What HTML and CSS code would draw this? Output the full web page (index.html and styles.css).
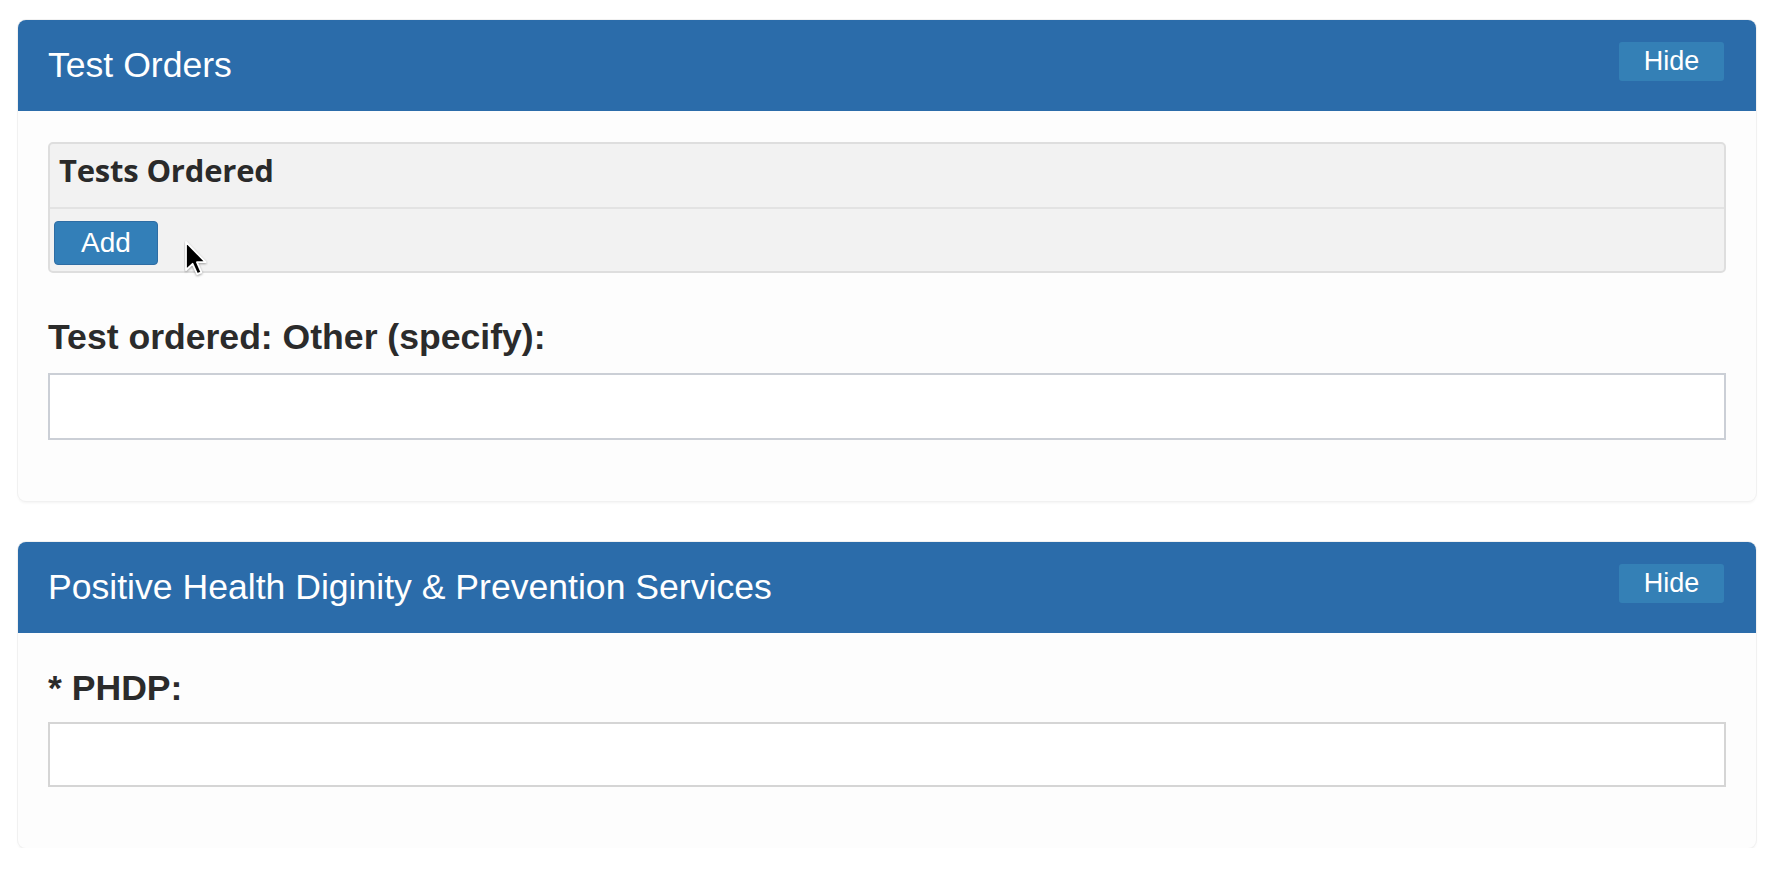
FILE: index.html
```html
<!DOCTYPE html>
<html>
<head>
<meta charset="utf-8">
<link rel="stylesheet" href="styles.css">
</head>
<body>
<div class="page">
  <section class="card">
    <div class="card-head">
      <h2 class="card-title">Test Orders</h2>
      <button class="hide-btn">Hide</button>
    </div>
    <div class="card-body">
      <div class="subpanel">
        <div class="subpanel-head">Tests Ordered</div>
        <div class="subpanel-body">
          <button class="add-btn">Add</button>
          <svg class="cursor" width="24" height="38" viewBox="0 0 24 38"><path d="M2 2 L2 30 L8.6 23.8 L13.2 34.2 L17.4 32.4 L12.9 22.2 L21.6 22.2 Z" fill="#000" stroke="#fff" stroke-width="1.8" stroke-linejoin="round" style="filter: drop-shadow(0 1px 1px rgba(0,0,0,0.35))"/></svg>
        </div>
      </div>
      <label class="field-label">Test ordered: Other (specify):</label>
      <div class="input input-a"></div>
    </div>
  </section>
  <section class="card">
    <div class="card-head">
      <h2 class="card-title">Positive Health Diginity &amp; Prevention Services</h2>
      <button class="hide-btn">Hide</button>
    </div>
    <div class="card-body card-body-b">
      <label class="field-label label-b">* PHDP:</label>
      <div class="input input-b"></div>
    </div>
  </section>
</div>
</body>
</html>
```
FILE: styles.css
```css
html, body {
  margin: 0;
  padding: 0;
  background: #ffffff;
}
body {
  font-family: "Liberation Sans", Arial, sans-serif;
  color: #2b2b2b;
}
.page {
  padding: 20px 18px 0 18px;
  display: flex;
  flex-direction: column;
  gap: 41px;
}
.card {
  background: #fdfdfd;
  border-radius: 8px;
  box-shadow: 0 0 0 1px #f1f1f1, 0 2px 3px rgba(0,0,0,0.05);
  overflow: hidden;
}
.card-head {
  background: #2b6caa;
  height: 91px;
  display: flex;
  align-items: center;
  justify-content: space-between;
  padding: 0 32px 0 30px;
}
.card-title {
  margin: 0;
  font-weight: normal;
  font-size: 35.6px;
  color: #ffffff;
}
.hide-btn {
  background: #3480b6;
  border: none;
  border-radius: 3px;
  color: #ffffff;
  font-family: "Liberation Sans", Arial, sans-serif;
  font-size: 27px;
  width: 105px;
  height: 39px;
  padding: 0;
  margin-top: -8px;
}
.card-body {
  padding: 31px 30px 61px 30px;
  display: flex;
  flex-direction: column;
}
.card-body-b {
  padding-top: 35px;
}
.subpanel {
  background: #f2f2f2;
  border: 2px solid #dedede;
  border-radius: 5px;
  margin-bottom: 44px;
}
.subpanel-head {
  font-family: "Open Sans", sans-serif;
  font-weight: 700;
  font-size: 31px;
  color: #2a2a2a;
  height: 63px;
  line-height: 52px;
  padding-left: 9px;
  border-bottom: 2px solid #e3e3e3;
  letter-spacing: -0.2px;
}
.subpanel-body {
  position: relative;
  padding: 12px 4px 5px;
  height: 45px;
}
.add-btn {
  background: #337fb8;
  border: 1px solid #2e6da4;
  border-radius: 4px;
  color: #ffffff;
  font-family: "Liberation Sans", Arial, sans-serif;
  font-size: 28px;
  width: 104px;
  height: 44px;
  padding: 0;
}
.cursor {
  position: absolute;
  left: 134px;
  top: 31px;
}
.field-label {
  font-size: 35.6px;
  font-weight: bold;
  color: #2b2b2b;
  line-height: 40px;
  margin-bottom: 16px;
}
.label-b {
  margin-bottom: 14px;
}
.input {
  background: #ffffff;
  border: 2px solid #cbcfd6;
}
.input-a {
  height: 63px;
}
.input-b {
  height: 61px;
  border-color: #d5d5d5;
}
```
